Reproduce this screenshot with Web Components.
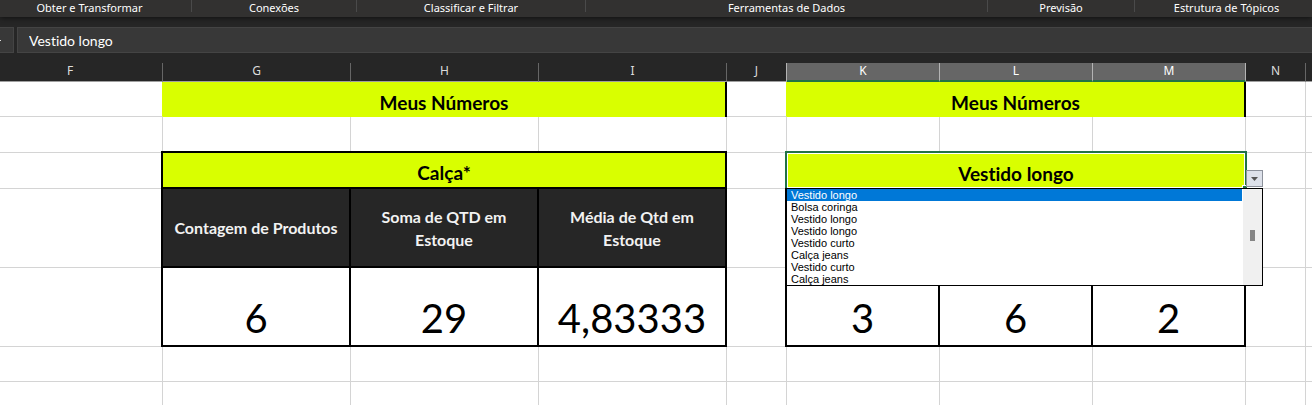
<!DOCTYPE html>
<html lang="pt-BR">
<head>
<meta charset="utf-8">
<title>Meus Números</title>
<style>
  html, body {
    margin: 0;
    height: 100%;
  }

  body {
    overflow: hidden;
    background: #fff;
    font-family: Lato, "Noto Sans", sans-serif;
    font-variant-ligatures: none;
  }
</style>
</head>
<body>
<excel-ribbon>
  <ribbon-group>Obter e Transformar</ribbon-group>
  <ribbon-group>Conexões</ribbon-group>
  <ribbon-group>Classificar e Filtrar</ribbon-group>
  <ribbon-group>Ferramentas de Dados</ribbon-group>
  <ribbon-group>Previsão</ribbon-group>
  <ribbon-group>Estrutura de Tópicos</ribbon-group>
</excel-ribbon>
<formula-bar value="Vestido longo"></formula-bar>
<sheet-grid></sheet-grid>

<script>
class ExcelRibbon extends HTMLElement {
  constructor() {
    super();
    this.attachShadow({ mode: "open" });
    this.shadowRoot.innerHTML = `
      <style>
        :host {
          display: block;
          position: relative;
          overflow: hidden;
          background: #323130;
          box-shadow: 0 1px 5px #111;
        }

        .groups {
          display: grid;
          grid-template-columns: 204fr 165fr 229fr 402fr 147fr 183fr;
          height: 17px;
          margin: 0 -6px 0 -12px;
        }
      </style>
      <div class="groups"><slot></slot></div>`;
  }
}

class RibbonGroup extends HTMLElement {
  constructor() {
    super();
    this.attachShadow({ mode: "open" });
    this.shadowRoot.innerHTML = `
      <style>
        :host {
          display: block;
          height: 12px;
          border-right: 1px solid #4a4a4a;
          color: #fff;
          font: 11px/16px "Noto Sans", sans-serif;
          text-align: center;
          white-space: nowrap;
        }

        :host(:last-child) {
          border-right: 0;
        }
      </style>
      <slot></slot>`;
  }
}

class FormulaBar extends HTMLElement {
  constructor() {
    super();
    this.attachShadow({ mode: "open" });
  }

  connectedCallback() {
    this.shadowRoot.innerHTML = `
      <style>
        :host {
          display: flex;
          gap: 3px;
          padding: 10px 0;
          background: #262626;
        }

        .name-box,
        input {
          box-sizing: border-box;
          height: 26px;
          border: 1px solid #444;
          background: #383838;
        }

        .name-box {
          display: flex;
          align-items: center;
          width: 14px;
          border-left: 0;
        }

        .name-box::before {
          content: "";
          width: 1px;
          height: 1px;
          background: #ddd;
        }

        input {
          flex: 1;
          min-width: 0;
          margin: 0;
          padding: 0 11px;
          border-right: 0;
          border-radius: 0;
          outline: 0;
          color: #fff;
          font-family: inherit;
          font-size: 14px;
          font-variant-ligatures: none;
        }
      </style>
      <div class="name-box"></div>
      <input type="text" aria-label="Barra de fórmulas">`;
    this.shadowRoot.querySelector("input").value = this.getAttribute("value");
  }
}

// Selection frame, arrow button and open list of a validated cell
class CellPicker extends HTMLElement {
  constructor() {
    super();
    this.attachShadow({ mode: "open" });
  }

  connectedCallback() {
    const options = this.getAttribute("options").split(",");

    this.shadowRoot.innerHTML = `
      <style>
        :host {
          display: block;
        }

        .frame {
          position: absolute;
          inset: -2px -2px 1px;
          border: 2px solid #217346;
          border-bottom: 0;
          box-shadow: inset 0 0 0 1px #fff;
        }

        .handle {
          position: absolute;
          right: -2px;
          bottom: 1px;
          width: 4px;
          height: 2px;
          border: solid #fff;
          border-width: 1px 0 0 1px;
          background: #217346;
        }

        button {
          position: absolute;
          right: -18px;
          bottom: 2px;
          display: flex;
          align-items: center;
          justify-content: center;
          box-sizing: border-box;
          width: 17px;
          height: 17px;
          padding: 0;
          border: 1px solid #8c919b;
          border-radius: 0;
          background: #dde1ea;
        }

        .list {
          position: absolute;
          top: 100%;
          left: -1px;
          right: -18px;
          z-index: 1;
          display: flex;
          box-sizing: border-box;
          margin-top: -1px;
          border: 1px solid #000;
          background: #fff;
        }

        select {
          flex: 1;
          height: 96px;
          margin: 0;
          padding: 0;
          border: 0;
          border-radius: 0;
          outline: 0;
          overflow: hidden;
          background: #fff;
          color: #000;
          font: 11px/12px "Liberation Sans", sans-serif;
          scrollbar-width: none;
        }

        option {
          height: 12px;
          min-height: 12px;
          padding: 0 4px;
          line-height: 14px;
        }

        option:checked {
          background: #0078d7 linear-gradient(#0078d7, #0078d7);
          color: #fff;
        }

        .track {
          display: flex;
          align-items: center;
          justify-content: center;
          width: 19px;
          margin-left: 1px;
          padding-bottom: 3px;
          box-sizing: border-box;
          background: #f0f0f0;
        }

        .thumb {
          width: 5px;
          height: 11px;
          background: #858585;
        }
      </style>
      <div class="frame"></div>
      <div class="handle"></div>
      <button type="button" aria-label="Abrir lista">
        <svg width="7" height="4" viewBox="0 0 7 4"><path d="M0 0h7L3.5 4z" fill="#555"/></svg>
      </button>
      <div class="list">
        <select size="8" aria-label="Produto">
          ${options.map((name, i) => `<option${i ? "" : " selected"}>${name}</option>`).join("")}
        </select>
        <div class="track"><div class="thumb"></div></div>
      </div>`;

    const list = this.shadowRoot.querySelector(".list");
    this.shadowRoot.querySelector("button").addEventListener("click", () => {
      list.hidden = !list.hidden;
      list.style.display = list.hidden ? "none" : "";
    });
  }
}

class SheetGrid extends HTMLElement {
  constructor() {
    super();
    this.attachShadow({ mode: "open" });
    this.shadowRoot.innerHTML = `
      <style>
        :host {
          display: block;
          overflow: hidden;
        }

        /* column F is partly scrolled out on the left */
        table {
          width: calc(100% + 22px);
          margin-left: -22px;
          border-spacing: 0;
          table-layout: fixed;
          color: #000;
        }

        .c-f { width: 185px; }
        .c-wide { width: 188px; }
        .c-mid { width: 153px; }
        .c-gap { width: 60px; }

        th, td {
          box-sizing: border-box;
          padding: 0;
          border: solid #d4d4d4;
          border-width: 0 1px 1px 0;
          text-align: center;
        }

        thead th {
          height: 19px;
          padding-bottom: 2px;
          border-right-color: #666;
          border-bottom-color: #a0a0a0;
          background: #262626;
          color: #ddd;
          font: 12px/14px "Noto Sans", sans-serif;
        }

        thead .on {
          padding-bottom: 1px;
          border-right-color: #b4b4b4;
          border-bottom: 2px solid #217346;
          background: #666;
          color: #fff;
        }

        thead .before-on { border-right-color: #b4b4b4; }

        th:last-child, td:last-child { border-right: 0; }

        .r35 { height: 35px; }
        .r36 { height: 36px; }
        .r79 { height: 79px; }

        .title {
          padding-top: 6px;
          border-color: #d9ff00;
          border-bottom: 0;
          background: #d9ff00;
          font-size: 19px;
          font-weight: bold;
          line-height: 24px;
        }

        .yellow-right { border-right-color: #d9ff00; }
        .right { border-right: 2px solid #000; }

        /* thick outline: the top and left edges lie over the neighbours' grid lines */
        .boxed, .head, .number {
          border-right: 2px solid #000;
          border-bottom: 2px solid #000;
          box-shadow: -2px 0 #000, 0 -2px #000, -2px -2px #000;
        }

        .head {
          background: #262626;
          color: #f2f2f2;
          font-size: 16px;
          font-weight: bold;
          line-height: 23px;
        }

        .number {
          padding-bottom: 3px;
          font-size: 40px;
          line-height: 48px;
          vertical-align: bottom;
        }

        .picked { position: relative; }
      </style>
      <table>
        <colgroup>
          <col class="c-f">
          <col class="c-wide"><col class="c-wide"><col class="c-wide">
          <col class="c-gap">
          <col class="c-mid"><col class="c-mid"><col class="c-mid">
          <col class="c-gap">
          <col>
        </colgroup>
        <thead>
          <tr>
            <th>F</th><th>G</th><th>H</th><th>I</th><th class="before-on">J</th>
            <th class="on">K</th><th class="on">L</th><th class="on">M</th>
            <th>N</th><th></th>
          </tr>
        </thead>
        <tbody>
          <tr class="r35">
            <td class="yellow-right"></td>
            <td colspan="3" class="title right">Meus Números</td>
            <td class="yellow-right"></td>
            <td colspan="3" class="title right">Meus Números</td>
            <td></td><td></td>
          </tr>
          <tr class="r36">
            <td></td><td></td><td></td><td></td><td></td>
            <td></td><td></td><td></td><td></td><td></td>
          </tr>
          <tr class="r36">
            <td></td>
            <td colspan="3" class="title boxed">Calça*</td>
            <td></td>
            <td colspan="3" class="title picked">Vestido longo
              <cell-picker options="Vestido longo,Bolsa coringa,Vestido longo,Vestido longo,Vestido curto,Calça jeans,Vestido curto,Calça jeans"></cell-picker>
            </td>
            <td></td><td></td>
          </tr>
          <tr class="r79">
            <td></td>
            <td class="head">Contagem de Produtos</td>
            <td class="head">Soma de QTD em<br>Estoque</td>
            <td class="head">Média de Qtd em<br>Estoque</td>
            <td></td>
            <td class="head"></td><td class="head"></td><td class="head"></td>
            <td></td><td></td>
          </tr>
          <tr class="r79">
            <td></td>
            <td class="number">6</td>
            <td class="number">29</td>
            <td class="number">4,83333</td>
            <td></td>
            <td class="number">3</td>
            <td class="number">6</td>
            <td class="number">2</td>
            <td></td><td></td>
          </tr>
          <tr class="r35">
            <td></td><td></td><td></td><td></td><td></td>
            <td></td><td></td><td></td><td></td><td></td>
          </tr>
          <tr class="r35">
            <td></td><td></td><td></td><td></td><td></td>
            <td></td><td></td><td></td><td></td><td></td>
          </tr>
        </tbody>
      </table>`;
  }
}

customElements.define("excel-ribbon", ExcelRibbon);
customElements.define("ribbon-group", RibbonGroup);
customElements.define("formula-bar", FormulaBar);
customElements.define("cell-picker", CellPicker);
customElements.define("sheet-grid", SheetGrid);
</script>
</body>
</html>
